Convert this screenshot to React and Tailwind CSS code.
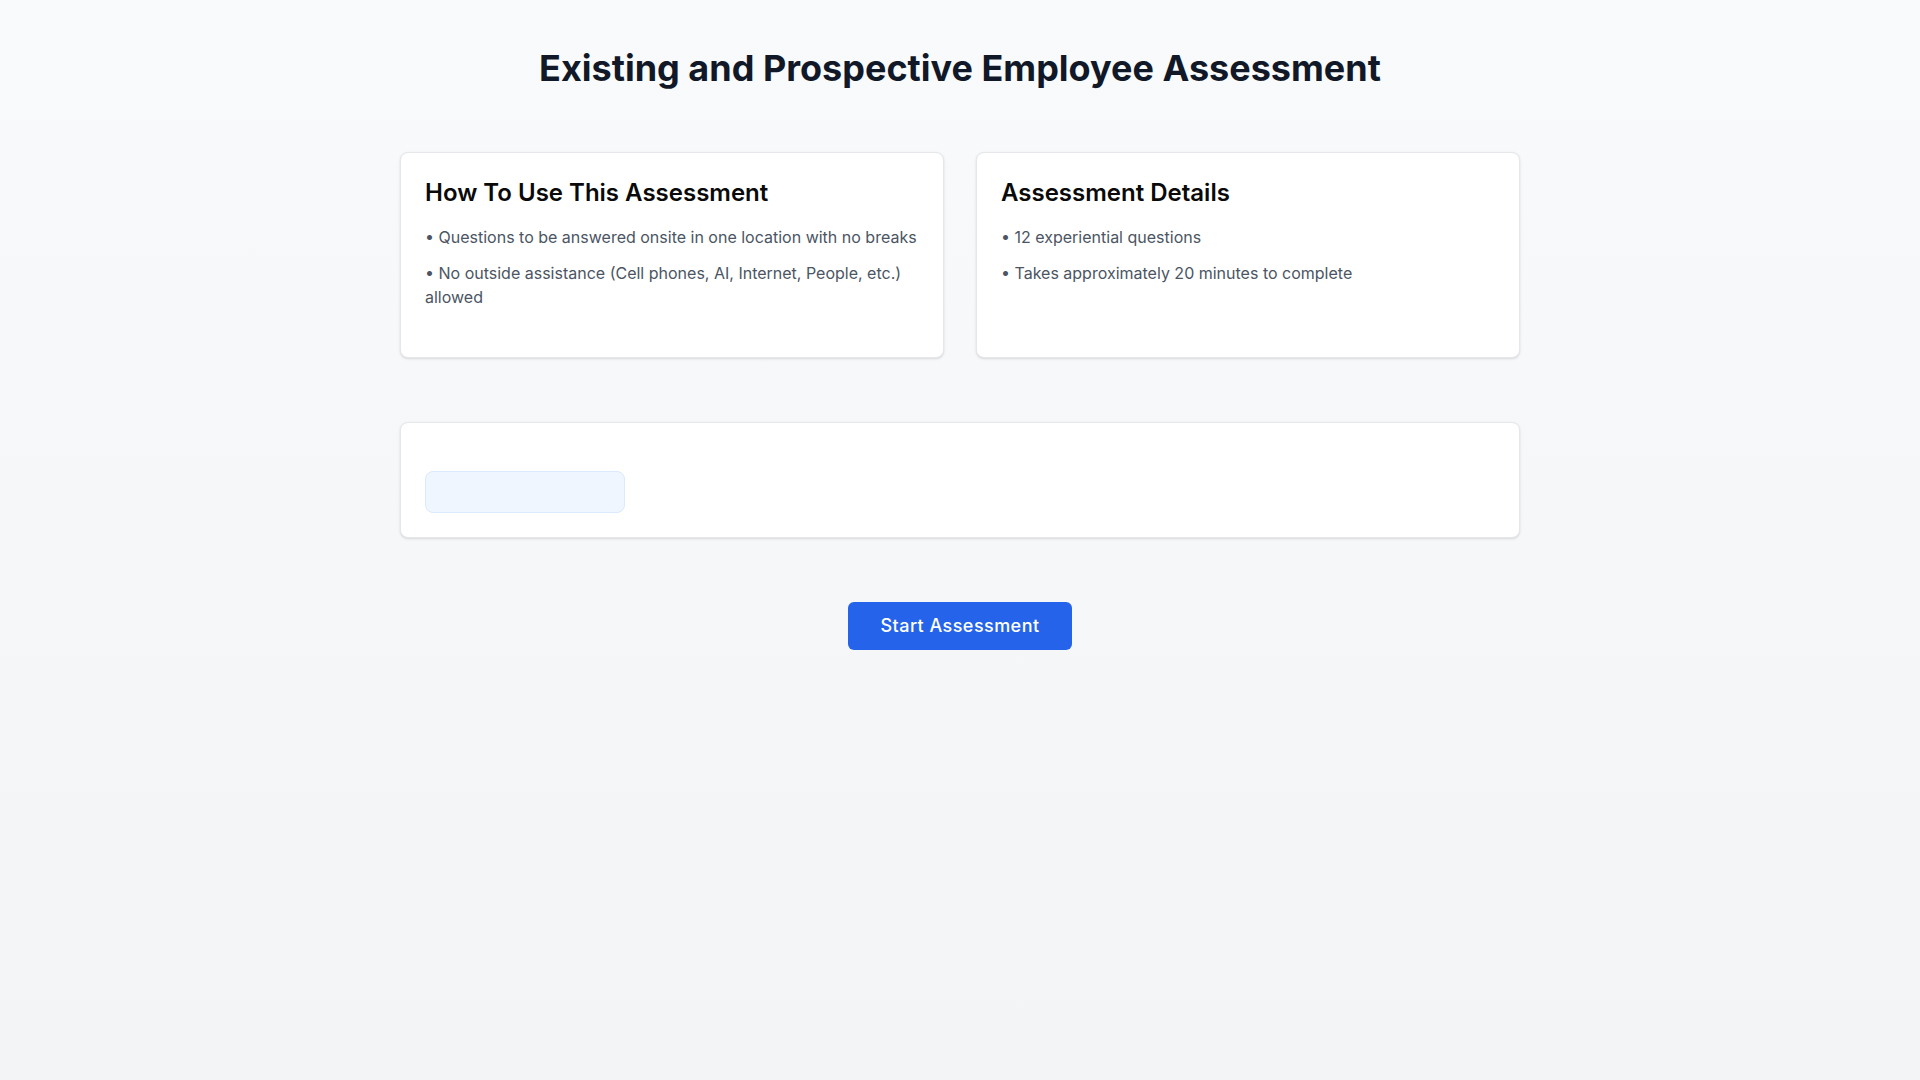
export default function App() {
  return (
    <div className="min-h-screen bg-gradient-to-b from-[#f9fafb] to-[#f3f4f6] font-['Inter',sans-serif]">
      <div className="max-w-6xl mx-auto px-4 py-12">
        <h1 className="text-4xl font-bold text-[#111827] text-center mb-16">
          Existing and Prospective Employee Assessment
        </h1>
        <div className="grid grid-cols-2 gap-8 mb-16">
          <div className="bg-white rounded-lg border border-[#e5e7eb] shadow-sm p-6 pb-12">
            <h2 className="text-2xl font-semibold text-[#0a0a0a] mb-4">How To Use This Assessment</h2>
            <ul className="space-y-3 text-base text-[#4b5563]">
              <li>• Questions to be answered onsite in one location with no breaks</li>
              <li>• No outside assistance (Cell phones, AI, Internet, People, etc.) allowed</li>
            </ul>
          </div>
          <div className="bg-white rounded-lg border border-[#e5e7eb] shadow-sm p-6">
            <h2 className="text-2xl font-semibold text-[#0a0a0a] mb-4">Assessment Details</h2>
            <ul className="space-y-3 text-base text-[#4b5563]">
              <li>• 12 experiential questions</li>
              <li>• Takes approximately 20 minutes to complete</li>
            </ul>
          </div>
        </div>
        <div className="bg-white rounded-lg border border-[#e5e7eb] shadow-sm p-6 pt-12 mb-16">
          <div className="w-[200px] h-[42px] rounded-lg bg-[#eff6ff] border border-[#dbeafe]"></div>
        </div>
        <div className="flex justify-center">
          <button className="px-8 py-2.5 rounded-md bg-[#2563eb] text-white text-lg font-medium tracking-wide">
            Start Assessment
          </button>
        </div>
      </div>
    </div>
  );
}
